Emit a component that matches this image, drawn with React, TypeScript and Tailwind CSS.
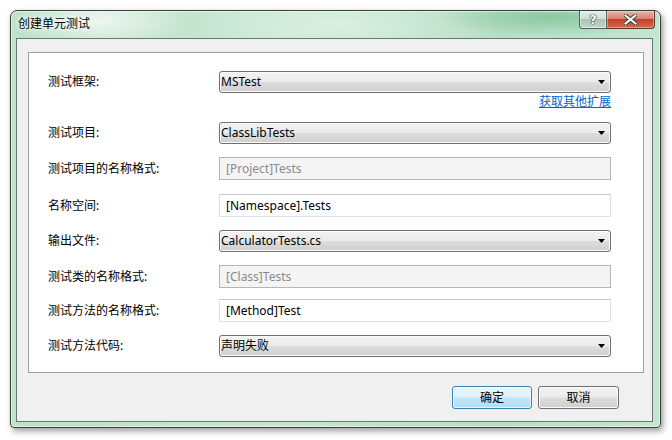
import React from "react";

const FONT = "font-['Noto_Sans','Noto_Sans_CJK_SC',sans-serif]";

function Arrow() {
  return (
    <svg width="7" height="4" viewBox="0 0 7 4" className="ml-auto mr-[5px]">
      <path d="M0 0H7L3.5 4Z" fill="#000" />
    </svg>
  );
}

function Combo({ value }: { value: string }) {
  return (
    <div className="flex h-[22px] w-[392px] items-center rounded-[3px] border border-[#707070] bg-[linear-gradient(#f2f2f2_0%,#ebebeb_48%,#dddddd_52%,#cfcfcf_100%)] pl-[1px] shadow-[inset_0_0_0_1px_#fbfbfb] text-[12px] text-black">
      <span className="leading-none">{value}</span>
      <Arrow />
    </div>
  );
}

function TextBox({ value, disabled }: { value: string; disabled?: boolean }) {
  return (
    <div
      className={
        disabled
          ? "flex h-[23px] w-[392px] items-center border border-[#b5b5b5] bg-[#f4f4f4] pl-[6px] text-[12px] text-[#8a8a8a]"
          : "flex h-[23px] w-[392px] items-center border border-[#dde2e8] border-t-[#c6cad0] bg-white pl-[6px] text-[12px] text-black"
      }
    >
      <span className="leading-none">{value}</span>
    </div>
  );
}

function Row({ label, children, mt }: { label: string; children: React.ReactNode; mt: string }) {
  return (
    <div className={`flex items-center ${mt}`}>
      <div className="w-[171px] text-[12px] text-black">{label}</div>
      {children}
    </div>
  );
}

function CaptionButtons() {
  return (
    <div className="flex">
      <div className="flex h-[18px] w-[28px] items-center justify-center rounded-bl-[4px] border border-t-0 border-[#52625a] bg-[linear-gradient(#e2ede7_0%,#cfded6_45%,#adc2b7_50%,#c3d6cc_100%)] shadow-[inset_0_0_0_1px_rgba(255,255,255,0.45)]">
        <span className="text-[13px] font-bold leading-none text-white [text-shadow:0_0_1px_#222,0_0_1px_#222,0_0_1px_#222] font-['DejaVu_Sans',sans-serif]">?</span>
      </div>
      <div className="flex h-[18px] w-[48px] items-center justify-center rounded-br-[4px] border border-l-0 border-t-0 border-[#5b3a33] bg-[linear-gradient(#eab3a6_0%,#d98372_45%,#c4402a_50%,#d8664d_100%)] shadow-[inset_0_0_0_1px_rgba(255,255,255,0.35)]">
        <svg width="13" height="11" viewBox="0 0 13 11">
          <path d="M1.5 1.5L11.5 9.5M11.5 1.5L1.5 9.5" stroke="#3a3a3a" strokeWidth="4" strokeLinecap="square" />
          <path d="M1.5 1.5L11.5 9.5M11.5 1.5L1.5 9.5" stroke="#ffffff" strokeWidth="2" strokeLinecap="square" />
        </svg>
      </div>
    </div>
  );
}

export default function App() {
  return (
    <div className={`h-[440px] w-[672px] overflow-hidden bg-white pl-[10px] pt-[10px] ${FONT}`}>
      <div className="flex h-[418px] w-[651px] flex-col rounded-t-[7px] rounded-b-[4px] border border-[#33403a] bg-[radial-gradient(ellipse_90px_30px_at_90px_10px,rgba(255,255,255,0.7),transparent),radial-gradient(ellipse_120px_20px_at_540px_6px,rgba(100,180,125,0.55),transparent),radial-gradient(ellipse_160px_40px_at_330px_14px,rgba(255,255,255,0.4),transparent),linear-gradient(90deg,#bde1c9_0%,#c6e6d1_40%,#b8dfc6_75%,#c4e5d0_100%)] shadow-[2px_3px_6px_rgba(0,0,0,0.4),inset_0_0_0_1px_rgba(255,255,255,0.55)]">
        <div className="flex h-[27px] shrink-0 items-start">
          <div className="pl-[7px] pt-[6px] text-[12px] leading-[14px] text-black [text-shadow:0_0_6px_#ffffff,0_0_3px_#ffffff]">创建单元测试</div>
          <div className="ml-auto mr-[5px]">
            <CaptionButtons />
          </div>
        </div>
        <div className="ml-[5px] flex h-[384px] w-[637px] flex-col border border-[#66786f] bg-[#f0f0f0]">
          <div className="ml-[11px] mt-[13px] h-[321px] w-[616px] border border-[#a0a0a0] bg-white pl-[19px]">
            <Row label="测试框架:" mt="mt-[18px]">
              <Combo value="MSTest" />
            </Row>
            <div className="flex h-[29px] w-[563px] justify-end pt-[2px]">
              <span className="text-[12px] leading-[14px] text-[#0066cc] underline">获取其他扩展</span>
            </div>
            <Row label="测试项目:" mt="mt-0">
              <Combo value="ClassLibTests" />
            </Row>
            <Row label="测试项目的名称格式:" mt="mt-[13px]">
              <TextBox value="[Project]Tests" disabled />
            </Row>
            <Row label="名称空间:" mt="mt-[14px]">
              <TextBox value="[Namespace].Tests" />
            </Row>
            <Row label="输出文件:" mt="mt-[13px]">
              <Combo value="CalculatorTests.cs" />
            </Row>
            <Row label="测试类的名称格式:" mt="mt-[13px]">
              <TextBox value="[Class]Tests" disabled />
            </Row>
            <Row label="测试方法的名称格式:" mt="mt-[11px]">
              <TextBox value="[Method]Test" />
            </Row>
            <Row label="测试方法代码:" mt="mt-[13px]">
              <Combo value="声明失败" />
            </Row>
          </div>
          <div className="mr-[33px] mt-[13px] flex justify-end gap-[6px]">
            <button className="h-[23px] w-[80px] rounded-[3px] border border-[#3c7fb1] bg-[linear-gradient(#ecf7fd_0%,#dcf0fb_48%,#c4e5f6_52%,#b2ddf3_100%)] text-[12px] text-black shadow-[inset_0_0_0_1px_#ffffffaa]">
              确定
            </button>
            <button className="h-[23px] w-[81px] rounded-[3px] border border-[#707070] bg-[linear-gradient(#f2f2f2_0%,#ebebeb_48%,#dddddd_52%,#cfcfcf_100%)] text-[12px] text-black shadow-[inset_0_0_0_1px_#fbfbfb]">
              取消
            </button>
          </div>
        </div>
      </div>
    </div>
  );
}
